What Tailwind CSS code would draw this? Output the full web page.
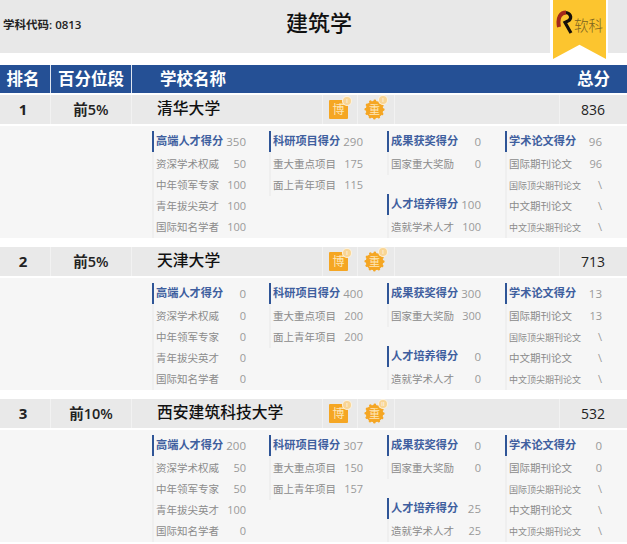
<!DOCTYPE html>
<html lang="zh">
<head>
<meta charset="utf-8">
<script src="https://cdn.jsdelivr.net/npm/@tailwindcss/browser@4"></script>
</head>
<body class="bg-white">
<div id="page" class="relative w-[627px] h-[544px] overflow-hidden bg-white text-[#222] font-['Open_Sans','Noto_Sans_CJK_SC',sans-serif]">
  <header class="h-[53px] bg-[#e8e8e8] flex items-center relative">
    <div class="pl-[3px] w-[250px] text-[11.5px] font-semibold leading-none pb-[3px]">学科代码: 0813</div>
    <h1 class="absolute left-[286px] top-[6px] text-[22px] font-medium leading-[32px] text-[#111]">建筑学</h1>
  </header>
  <div class="absolute left-[550px] top-0 w-[58px] h-[53px] bg-white"></div>
  <div class="absolute left-[553px] top-0 w-[53px] h-[59px] bg-[#fcc52f] [clip-path:polygon(0_0,100%_0,100%_100%,50%_76%,0_100%)] flex items-start">
    <svg class="mt-[10px] ml-[3px] shrink-0" width="18" height="24" viewBox="0 0 18 24"><path d="M9 2.500 C14 2.500 16.500 7 13 10.500 L9 12.500 L15 23" fill="none" stroke="#17100a" stroke-width="3.200"/><path d="M3 17 C1 7 5 2.500 10 2.500" fill="none" stroke="#a3281a" stroke-width="4"/></svg>
    <span class="mt-[15px] text-[14.500px] leading-[20px] text-[#7d6420] font-['Noto_Sans_CJK_SC',sans-serif] font-light whitespace-nowrap">软科</span>
  </div>
  <div class="mt-[12px] mb-[2px] h-[28px] bg-[#255095] text-white flex items-center text-[16.500px] font-bold leading-none">
    <div class="w-[51px] h-full flex items-center justify-center pr-[4px] border-r border-[#dfe6f0]">排名</div>
    <div class="w-[81px] h-full flex items-center justify-center border-r border-[#dfe6f0]">百分位段</div>
    <div class="pl-[28px] flex-1">学校名称</div>
    <div class="pr-[17px]">总分</div>
  </div>
  <div id="rows"></div>
</div>
<script>
const cell='flex justify-between items-center h-[21px] border-l-2 border-[#efefef] pl-[2px] text-[#8b8b8b] ';
const head=(t,v)=>`<div class="flex justify-between items-center h-[21px] border-l-2 border-[#2f5597] pl-[2px] text-[11.200px] font-bold text-[#3f5f9f]"><span>${t}</span><span class="font-normal text-[#9a9a9a] text-[11.500px]">${v}</span></div>`;
const gap='<div class="h-[2px] border-l-2 border-[#efefef]"></div>';
const line=(t,v,small)=>`<div class="${cell}"><span class="${small?'text-[9px]':'text-[10.500px]'}">${t}</span><span class="text-[#9a9a9a] text-[11px]">${v}</span></div>`;
const data=[
 {r:'1',p:'前5%',n:'清华大学',t:'836',b:'I',z:'I',a:[350,50,100,100,100],c:[290,175,115],d:[0,0],e:[100,100],f:[96,96,'\\','\\','\\']},
 {r:'2',p:'前5%',n:'天津大学',t:'713',b:'I',z:'I',a:[0,0,0,0,0],c:[400,200,200],d:[300,300],e:[0,0],f:[13,13,'\\','\\','\\']},
 {r:'3',p:'前10%',n:'西安建筑科技大学',t:'532',b:'I',z:'II',a:[200,50,50,100,0],c:[307,150,157],d:[0,0],e:[25,25],f:[0,0,'\\','\\','\\']}
];
document.getElementById('rows').innerHTML=data.map(x=>`
<section class="bg-white">
  <div class="h-[29px] bg-[#e9e9e9] flex items-center">
    <div class="w-[51px] h-full flex items-center justify-center pr-[4px] border-r border-[#f2f2f2] text-[15px] font-bold">${x.r}</div>
    <div class="w-[81px] h-full flex items-center justify-center border-r border-[#f2f2f2] text-[14.500px] font-semibold">${x.p}</div>
    <div class="w-[191px] h-full flex items-center pl-[25px] pb-[2px] border-r border-[#f2f2f2] text-[15.800px] font-medium leading-none text-[#111] whitespace-nowrap">${x.n}</div>
    <div class="w-[35px] h-full flex items-center pl-[6px] border-r border-[#f2f2f2]">
      <div class="relative w-[19px] h-[19px] bg-[#f5a623] rounded-[1px] flex items-center justify-center text-[#fde7b8] text-[12px] leading-none">博
        <span class="absolute -top-[4px] -right-[4px] w-[10px] h-[10px] rounded-full bg-[#f8d595] border border-white/70 text-white text-[6px] leading-[8px] text-center">${x.b}</span></div>
    </div>
    <div class="w-[37px] h-full flex items-center pl-[6px] border-r border-[#f2f2f2]">
      <div class="relative w-[21px] h-[21px] flex items-center justify-center text-[#fde7b8] text-[11px] leading-none">
        <svg class="absolute inset-0" viewBox="0 0 21 21"><circle cx="10.500" cy="10.500" r="8.800" fill="#f5a623"/><circle cx="10.500" cy="10.500" r="8.800" fill="none" stroke="#f5a623" stroke-width="2.600" stroke-linecap="round" stroke-dasharray="0.100 4.510"/></svg>
        <span class="relative">重</span>
        <span class="absolute -top-[4px] -right-[3px] w-[10px] h-[10px] rounded-full bg-[#f8d595] border border-white/70 text-white text-[6px] leading-[8px] text-center">${x.z}</span></div>
    </div>
    <div class="w-[165px] h-full border-r border-[#f2f2f2]"></div>
    <div class="flex-1 text-center pr-[1px] text-[14px] text-[#222]">${x.t}</div>
  </div>
  <div class="mt-[2px] h-[112px] bg-[#f6f6f6] pl-[152px] pt-[5px] flex mb-[9px]">
    <div class="w-[117px]"><div class="w-[94px]">${head('高端人才得分',x.a[0])}${gap}${line('资深学术权威',x.a[1])}${line('中年领军专家',x.a[2])}${line('青年拔尖英才',x.a[3])}${line('国际知名学者',x.a[4])}</div></div>
    <div class="w-[118px]"><div class="w-[94px]">${head('科研项目得分',x.c[0])}${gap}${line('重大重点项目',x.c[1])}${line('面上青年项目',x.c[2])}</div></div>
    <div class="w-[118px]"><div class="w-[94px]">${head('成果获奖得分',x.d[0])}${gap}${line('国家重大奖励',x.d[1])}<div class="h-[19px]"></div>${head('人才培养得分',x.e[0])}${gap}${line('造就学术人才',x.e[1])}</div></div>
    <div class="w-[122px]"><div class="w-[97px]">${head('学术论文得分',x.f[0])}${gap}${line('国际期刊论文',x.f[1])}${line('国际顶尖期刊论文',x.f[2],1)}${line('中文期刊论文',x.f[3])}${line('中文顶尖期刊论文',x.f[4],1)}</div></div>
  </div>
</section>`).join('');
</script>
</body>
</html>
